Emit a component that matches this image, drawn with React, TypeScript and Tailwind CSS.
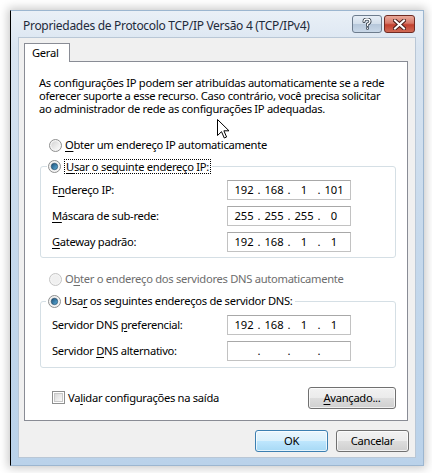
import React from "react";

const Radio = ({ checked, disabled }: { checked?: boolean; disabled?: boolean }) => (
  <svg width="13" height="13" viewBox="0 0 13 13" className="shrink-0">
    <defs>
      <linearGradient id="rg-out" x1="0" y1="0" x2="1" y2="1">
        <stop offset="0" stopColor="#d4d4d4" />
        <stop offset="1" stopColor="#fbfbfb" />
      </linearGradient>
      <linearGradient id="rg-dot" x1="0" y1="0" x2="1" y2="1">
        <stop offset="0" stopColor="#1a4e76" />
        <stop offset="1" stopColor="#5fb0dd" />
      </linearGradient>
    </defs>
    <circle cx="6.5" cy="6.5" r="6" fill="#f4f4f4" stroke={disabled ? "#c4c4c4" : "#8e8f8f"} />
    <circle cx="6.5" cy="6.5" r="4.2" fill={disabled ? "#f0f0f0" : "url(#rg-out)"} />
    {checked && <circle cx="6.5" cy="6.5" r="3.2" fill="url(#rg-dot)" stroke="#1c3f5c" strokeWidth="0.6" />}
  </svg>
);

const Check = () => (
  <div className="w-[13px] h-[13px] border border-[#8e8f8f] bg-white p-[1px] shrink-0">
    <div className="w-full h-full bg-gradient-to-br from-[#d9d9d9] to-[#fafafa] border border-[#c8c8c8]" />
  </div>
);

const IpBox = ({ parts }: { parts: string[] }) => (
  <div className="w-[124px] h-[20px] border border-[#c2c2c2] border-t-[#a8a8a8] bg-white flex items-center pl-[5px] text-black tracking-normal">
    {parts.map((p, i) => (
      <React.Fragment key={i}>
        <span className="w-[22px] text-center">{p}</span>
        {i < 3 && <span className="w-[8px] text-center">.</span>}
      </React.Fragment>
    ))}
  </div>
);

const Row = ({ label, parts }: { label: React.ReactNode; parts: string[] }) => (
  <div className="flex items-center h-[20px]">
    <span className="w-[175px]">{label}</span>
    <IpBox parts={parts} />
  </div>
);

const U = ({ children }: { children: React.ReactNode }) => (
  <span className="underline underline-offset-[2px]">{children}</span>
);

const Btn = ({ children, primary, w }: { children: React.ReactNode; primary?: boolean; w: string }) => (
  <button
    className={`${w} h-[22px] rounded-[3px] border text-black ${
      primary
        ? "border-[#3c7fb1] bg-[linear-gradient(#eaf6fd_0%,#d9f0fc_50%,#bee6fd_51%,#a7d9f5_100%)]"
        : "border-[#707070] bg-[linear-gradient(#f2f2f2_0%,#ebebeb_50%,#dddddd_51%,#cfcfcf_100%)]"
    } shadow-[inset_0_0_0_1px_rgba(255,255,255,0.7)]`}
  >
    {children}
  </button>
);

export default function App() {
  return (
    <div className="w-[432px] h-[473px] bg-white relative overflow-hidden font-['Noto_Sans',sans-serif] text-[11.2px] tracking-[-0.3px] text-black">
      <div className="pt-[10px] pl-[10px]">
        <div className="w-[414px] h-[456px] border border-[#9cb6d0] border-l-black bg-[linear-gradient(#eaf0f7_0%,#dae5f1_8%,#c6d9ec_50%,#bad2ea_100%)] shadow-[0_0_9px_2px_rgba(0,0,0,0.22)] flex flex-col">
          {/* title bar */}
          <div className="h-[26px] flex items-start justify-between pl-[12px] pr-[8px]">
            <span className="text-[12px] tracking-[-0.3px] mt-[6px] text-[#1e2a3a]">
              Propriedades de Protocolo TCP/IP Versão 4 (TCP/IPv4)
            </span>
            <div className="flex gap-[2px] mt-[4px]">
              <div className="w-[30px] h-[18px] rounded-[3px] border border-[#6d7c8d] bg-[linear-gradient(#e7eef6_0%,#d2deea_50%,#b6c7da_51%,#c9d8e8_100%)] flex items-center justify-center">
                <svg width="10" height="12" viewBox="0 0 10 12">
                  <path d="M2 3.5 Q2 1 5 1 Q8 1 8 3.5 Q8 5 5.5 6.2 L5.5 7.5" fill="none" stroke="#2f3a46" strokeWidth="3" strokeLinecap="round" />
                  <circle cx="5.5" cy="10.3" r="1.5" fill="#2f3a46" />
                  <path d="M2 3.5 Q2 1 5 1 Q8 1 8 3.5 Q8 5 5.5 6.2 L5.5 7.5" fill="none" stroke="#fff" strokeWidth="1.4" strokeLinecap="round" />
                  <circle cx="5.5" cy="10.3" r="0.8" fill="#fff" />
                </svg>
              </div>
              <div className="w-[31px] h-[18px] rounded-[3px] border border-[#6f2b23] bg-[linear-gradient(#e9a99b_0%,#d77868_45%,#c2402f_55%,#d06a55_100%)] flex items-center justify-center">
                <svg width="13" height="11" viewBox="0 0 13 11">
                  <path d="M2 1.5 L11 9.5 M11 1.5 L2 9.5" stroke="#4a1f1a" strokeWidth="4" strokeLinecap="square" />
                  <path d="M2 1.5 L11 9.5 M11 1.5 L2 9.5" stroke="#fff" strokeWidth="2" strokeLinecap="square" />
                </svg>
              </div>
            </div>
          </div>

          {/* body */}
          <div className="mx-[7px] h-[421px] bg-[#f0f0f0] border border-[#b9c7d6] pt-[5px] pl-[5px]">
            <div className="w-[46px] h-[19px] border border-[#898c95] border-b-0 bg-white pl-[7px] pt-[1px] relative z-10">
              Geral
            </div>
            <div className="w-[384px] h-[360px] -mt-[1px] border border-[#898c95] bg-white">
              <p className="pl-[14px] pt-[14px] leading-[13px]">
                As configurações IP podem ser atribuídas automaticamente se a rede
                <br />
                oferecer suporte a esse recurso. Caso contrário, você precisa solicitar
                <br />
                ao administrador de rede as configurações IP adequadas.
              </p>

              <div className="ml-[24px] mt-[21px] h-[18px] flex items-center gap-[3px]">
                <Radio />
                <span>
                  <U>O</U>bter um endereço IP automaticamente
                </span>
              </div>

              <fieldset className="ml-[15px] mt-[4px] w-[356px] border border-[#d5dfe5] rounded-[3px] pl-[11px] pb-[5px]">
                <legend className="-ml-[5px] px-[1px] h-[16px] flex items-center gap-[3px] bg-white">
                  <Radio checked />
                  <span className="border border-dotted border-black px-[1px] leading-[13px]">
                    <U>U</U>sar o seguinte endereço IP:
                  </span>
                </legend>
                <div className="flex flex-col gap-[6px] mt-[6px]">
                  <Row label={<>E<U>n</U>dereço IP:</>} parts={["192", "168", "1", "101"]} />
                  <Row label={<><U>M</U>áscara de sub-rede:</>} parts={["255", "255", "255", "0"]} />
                  <Row label={<><U>G</U>ateway padrão:</>} parts={["192", "168", "1", "1"]} />
                </div>
              </fieldset>

              <div className="ml-[24px] mt-[12px] h-[18px] flex items-center gap-[3px] text-[#6d6d6d]">
                <Radio disabled />
                <span>
                  O<U>b</U>ter o endereço dos servidores DNS automaticamente
                </span>
              </div>

              <fieldset className="ml-[15px] mt-[5px] w-[356px] border border-[#d5dfe5] rounded-[3px] pl-[11px] pb-[6px]">
                <legend className="-ml-[6px] px-[2px] h-[16px] flex items-center gap-[3px] bg-white">
                  <Radio checked />
                  <span>
                    Usa<U>r</U> os seguintes endereços de servidor DNS:
                  </span>
                </legend>
                <div className="flex flex-col gap-[6px] mt-[6px]">
                  <Row label={<>Servidor DNS <U>p</U>referencial:</>} parts={["192", "168", "1", "1"]} />
                  <Row label={<>Servidor <U>D</U>NS alternativo:</>} parts={["", "", "", ""]} />
                </div>
              </fieldset>

              <div className="ml-[15px] mt-[19px] w-[356px] flex items-center justify-between">
                <div className="ml-[12px] flex items-center gap-[3px]">
                  <Check />
                  <span>
                    Va<U>l</U>idar configurações na saída
                  </span>
                </div>
                <Btn w="w-[88px]">
                  <U>A</U>vançado...
                </Btn>
              </div>
            </div>

            <div className="flex justify-end gap-[8px] mt-[9px] pr-[6px]">
              <Btn primary w="w-[73px]">OK</Btn>
              <Btn w="w-[73px]">Cancelar</Btn>
            </div>
          </div>
        </div>
      </div>

      {/* mouse pointer */}
      <svg className="absolute left-[217px] top-[119px]" width="13" height="20" viewBox="0 0 13 20">
        <path d="M0.5 0.5 L0.5 16.5 L4.5 12.7 L7.3 19 L9.6 18 L6.9 11.8 L12 11.8 Z" fill="#fff" stroke="#000" strokeWidth="1" strokeLinejoin="round" />
      </svg>
    </div>
  );
}
